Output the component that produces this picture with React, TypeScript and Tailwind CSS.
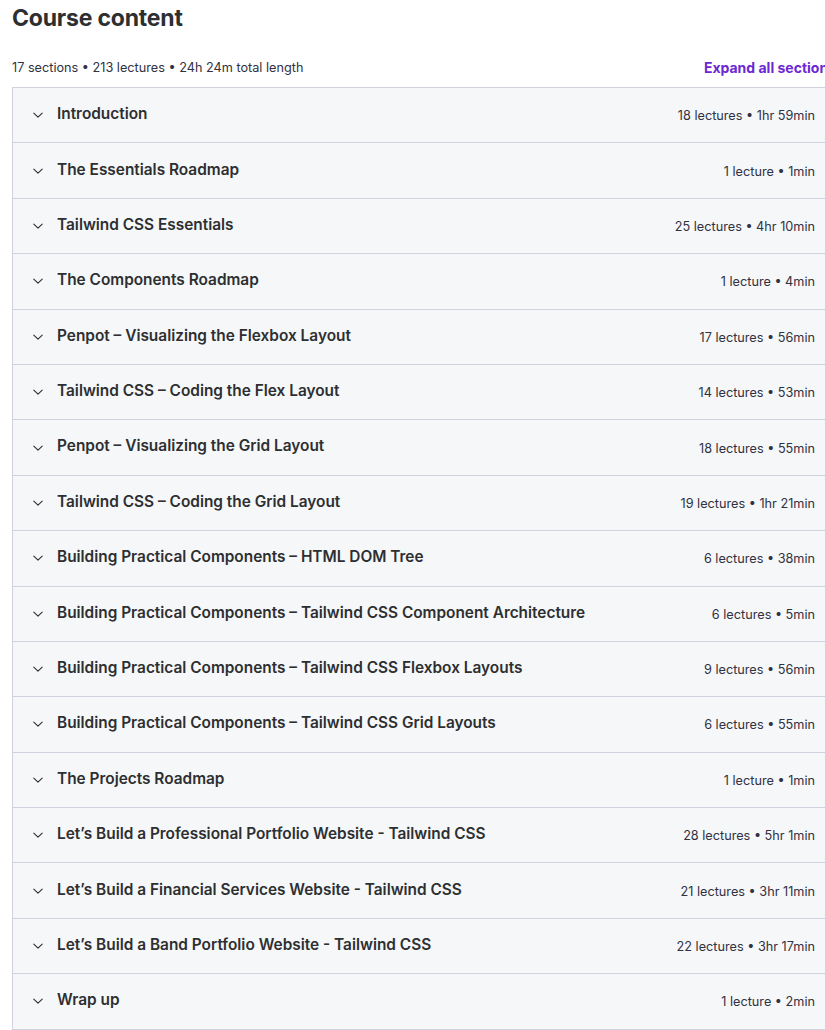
type Section = { title: string; meta: string };

const sections: Section[] = [
  { title: 'Introduction', meta: '18 lectures • 1hr 59min' },
  { title: 'The Essentials Roadmap', meta: '1 lecture • 1min' },
  { title: 'Tailwind CSS Essentials', meta: '25 lectures • 4hr 10min' },
  { title: 'The Components Roadmap', meta: '1 lecture • 4min' },
  { title: 'Penpot – Visualizing the Flexbox Layout', meta: '17 lectures • 56min' },
  { title: 'Tailwind CSS – Coding the Flex Layout', meta: '14 lectures • 53min' },
  { title: 'Penpot – Visualizing the Grid Layout', meta: '18 lectures • 55min' },
  { title: 'Tailwind CSS – Coding the Grid Layout', meta: '19 lectures • 1hr 21min' },
  { title: 'Building Practical Components – HTML DOM Tree', meta: '6 lectures • 38min' },
  {
    title: 'Building Practical Components – Tailwind CSS Component Architecture',
    meta: '6 lectures • 5min',
  },
  { title: 'Building Practical Components – Tailwind CSS Flexbox Layouts', meta: '9 lectures • 56min' },
  { title: 'Building Practical Components – Tailwind CSS Grid Layouts', meta: '6 lectures • 55min' },
  { title: 'The Projects Roadmap', meta: '1 lecture • 1min' },
  { title: 'Let’s Build a Professional Portfolio Website - Tailwind CSS', meta: '28 lectures • 5hr 1min' },
  { title: 'Let’s Build a Financial Services Website - Tailwind CSS', meta: '21 lectures • 3hr 11min' },
  { title: 'Let’s Build a Band Portfolio Website - Tailwind CSS', meta: '22 lectures • 3hr 17min' },
  { title: 'Wrap up', meta: '1 lecture • 2min' },
];

const Chevron = () => (
  <svg width="12" height="12" viewBox="0 0 12 12" fill="none" className="shrink-0">
    <path d="M1.8 4.2 6 8.2l4.2-4" stroke="#2d2f31" strokeWidth="1.1" strokeLinecap="round" strokeLinejoin="round" />
  </svg>
);

export default function App() {
  return (
    <div className="w-[825px] h-[1030px] overflow-hidden bg-white font-['Inter','Liberation_Sans',sans-serif] text-[#2d2f31]">
      <div className="ml-3 w-[824px]">
        <h2 className="pt-[3px] text-[23px] leading-[30px] font-bold tracking-[-0.2px] text-[#2d2f31]">
          Course content
        </h2>
        <div className="mt-[25px] flex items-center justify-between h-[20px]">
          <span className="text-[12.7px] text-[#303141]">17 sections • 213 lectures • 24h 24m total length</span>
          <button className="-mt-[2px] text-[14px] font-bold text-[#6d28d2] whitespace-nowrap">
            Expand all sections
          </button>
        </div>
        <div className="mt-[9px] border-l border-b border-[#d1d2e0] bg-[#f6f7f9]">
          {sections.map((s) => (
            <div
              key={s.title}
              className="h-[55.4px] border-t border-[#d1d2e0] flex items-center pl-[19px] pr-[21px]"
            >
              <Chevron />
              <span className="ml-[13px] text-[15.4px] font-semibold text-[#2d2f31] -mt-[3px]">{s.title}</span>
              <span className="ml-auto mt-[1px] text-[12.7px] text-[#303141] whitespace-nowrap">{s.meta}</span>
            </div>
          ))}
        </div>
      </div>
    </div>
  );
}
